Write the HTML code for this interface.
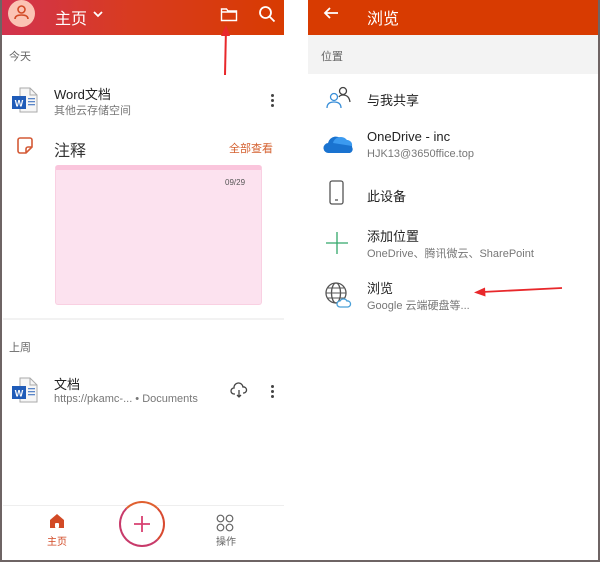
<!DOCTYPE html>
<html><head><meta charset="utf-8"><style>
*{margin:0;padding:0;box-sizing:border-box}
body{width:600px;height:562px;background:#fff;position:relative;overflow:hidden;font-family:"Liberation Sans","Noto Sans CJK SC",sans-serif;color:#222}
.a{position:absolute}
.t{font-size:13px}
.s{font-size:11px;color:#777}
</style></head><body>
<!-- outer border -->
<div class="a" style="left:0;top:0;width:2px;height:562px;background:#6e6464"></div>
<div class="a" style="left:0;top:560px;width:600px;height:2px;background:#6e6464"></div>
<div class="a" style="left:598px;top:0;width:2px;height:562px;background:#6e6464"></div>

<!-- LEFT header -->
<div class="a" style="left:2px;top:0;width:282px;height:35px;background:linear-gradient(90deg,#d2334f 0%,#d83b20 45%,#d83b01 100%)"></div>
<div class="a" style="left:8px;top:0;width:27px;height:27px;border-radius:50%;background:#fbc3b4"></div>
<svg class="a" style="left:8px;top:0" width="27" height="27" viewBox="0 0 27 27"><circle cx="13.5" cy="9.5" r="3.5" fill="none" stroke="#d24a26" stroke-width="1.6"/><path d="M7 19q0-4 6.5-4t6.5 4" fill="none" stroke="#d24a26" stroke-width="1.6"/></svg>
<div class="a" style="left:55px;top:5px;color:#fff;font-size:16px">主页</div>
<svg class="a" style="left:92px;top:10px" width="12" height="8"><path d="M2 2l4 4 4-4" fill="none" stroke="#fff" stroke-width="1.8"/></svg>
<svg class="a" style="left:220px;top:6px" width="18" height="16"><path d="M1.5 3h5l1.5 2h8.5v9.5h-15z M1.5 6h15" fill="none" stroke="#fff" stroke-width="1.4"/></svg>
<svg class="a" style="left:258px;top:5px" width="18" height="18"><circle cx="7.5" cy="7.5" r="5.5" fill="none" stroke="#fff" stroke-width="1.8"/><path d="M11.5 11.5l5 5" stroke="#fff" stroke-width="1.8"/></svg>
<!-- red arrow up -->
<svg class="a" style="left:218px;top:22px" width="16" height="56"><path d="M8 6L7 53" stroke="#e8282b" stroke-width="2"/><path d="M3 14L8 3L12 14z" fill="#e8282b"/></svg>

<div class="a s" style="left:9px;top:48px;color:#666">今天</div>
<!-- word icon -->
<svg class="a" style="left:11px;top:87px" width="28" height="28"><path d="M9 1h10l7 7v17H9z" fill="#f6f6f6" stroke="#aaa"/><path d="M19 1v7h7" fill="none" stroke="#aaa"/><rect x="17" y="11" width="7" height="1.3" fill="#5a86c8"/><rect x="17" y="14" width="7" height="1.3" fill="#5a86c8"/><rect x="17" y="17" width="7" height="1.3" fill="#5a86c8"/><rect x="1" y="9" width="14" height="13" fill="#1f5bb8"/><text x="8" y="19.5" font-size="9" fill="#fff" text-anchor="middle" font-family="Liberation Sans" font-weight="bold">W</text></svg>
<div class="a t" style="left:54px;top:84px">Word文档</div>
<div class="a s" style="left:54px;top:102px">其他云存储空间</div>
<div class="a" style="left:271px;top:94px;width:3px;height:3px;border-radius:50%;background:#444;box-shadow:0 5px #444,0 10px #444"></div>

<svg class="a" style="left:16px;top:137px" width="18" height="18"><path d="M2 3a2 2 0 012-2h10a2 2 0 012 2v7l-6 6H4a2 2 0 01-2-2z M10 16v-4a2 2 0 012-2h4" fill="none" stroke="#d45a36" stroke-width="1.6"/></svg>
<div class="a" style="left:54px;top:137px;font-size:16px;color:#333">注释</div>
<div class="a" style="left:229px;top:140px;font-size:11px;color:#d4602f">全部查看</div>
<div class="a" style="left:55px;top:165px;width:207px;height:140px;background:#fce2ef;border:1px solid #f9d0e2;border-top:5px solid #fac5dc;border-radius:3px"></div>
<div class="a" style="left:225px;top:178px;font-size:8px;color:#555">09/29</div>
<div class="a" style="left:3px;top:318px;width:281px;height:2px;background:#f2f2f2"></div>

<div class="a s" style="left:9px;top:339px;color:#666">上周</div>
<svg class="a" style="left:11px;top:377px" width="28" height="28"><path d="M9 1h10l7 7v17H9z" fill="#f6f6f6" stroke="#aaa"/><path d="M19 1v7h7" fill="none" stroke="#aaa"/><rect x="17" y="11" width="7" height="1.3" fill="#5a86c8"/><rect x="17" y="14" width="7" height="1.3" fill="#5a86c8"/><rect x="17" y="17" width="7" height="1.3" fill="#5a86c8"/><rect x="1" y="9" width="14" height="13" fill="#1f5bb8"/><text x="8" y="19.5" font-size="9" fill="#fff" text-anchor="middle" font-family="Liberation Sans" font-weight="bold">W</text></svg>
<div class="a t" style="left:54px;top:374px">文档</div>
<div class="a s" style="left:54px;top:393px">https://pkamc-... • Documents</div>
<svg class="a" style="left:230px;top:382px" width="18" height="16"><path d="M5 12H4a3 3 0 010-6 4.5 4.5 0 019-1 3 3 0 011 6h-1" fill="none" stroke="#444" stroke-width="1.3"/><path d="M9 8v7M7 13l2 2 2-2" fill="none" stroke="#444" stroke-width="1.3"/></svg>
<div class="a" style="left:271px;top:385px;width:3px;height:3px;border-radius:50%;background:#444;box-shadow:0 5px #444,0 10px #444"></div>

<div class="a" style="left:3px;top:505px;width:281px;height:1px;background:#eee"></div>
<svg class="a" style="left:49px;top:513px" width="16" height="16"><path d="M1 7L8 1l7 6v8H1z" fill="#d24a26"/><rect x="6" y="10" width="4" height="5" fill="#fff" rx="1"/></svg>
<div class="a" style="left:47px;top:533px;font-size:10px;color:#d24a26">主页</div>
<div class="a" style="left:119px;top:501px;width:46px;height:46px;border-radius:50%;border:2px solid #c83a6a;border-top-color:#e06030;border-right-color:#d84a30;background:#fff"></div>
<svg class="a" style="left:131px;top:513px" width="22" height="22"><path d="M11 3v16M3 11h16" stroke="#d84070" stroke-width="1.8"/></svg>
<svg class="a" style="left:216px;top:514px" width="18" height="18"><circle cx="4.5" cy="4.5" r="3.3" fill="none" stroke="#666" stroke-width="1.2"/><circle cx="13.5" cy="4.5" r="3.3" fill="none" stroke="#666" stroke-width="1.2"/><circle cx="4.5" cy="13.5" r="3.3" fill="none" stroke="#666" stroke-width="1.2"/><circle cx="13.5" cy="13.5" r="3.3" fill="none" stroke="#666" stroke-width="1.2"/></svg>
<div class="a" style="left:216px;top:533px;font-size:10px;color:#666">操作</div>

<!-- RIGHT -->
<div class="a" style="left:308px;top:0;width:290px;height:35px;background:#d83b01"></div>
<svg class="a" style="left:323px;top:6px" width="16" height="14"><path d="M15 7H2M7 2L2 7l5 5" fill="none" stroke="#fff" stroke-width="1.8"/></svg>
<div class="a" style="left:367px;top:5px;color:#fff;font-size:16px">浏览</div>
<div class="a" style="left:308px;top:35px;width:290px;height:39px;background:#f3f3f3"></div>
<div class="a s" style="left:321px;top:48px;color:#666">位置</div>

<svg class="a" style="left:325px;top:86px" width="26" height="24"><circle cx="9" cy="11" r="3.5" fill="none" stroke="#3a8fd8" stroke-width="1.3"/><path d="M2 22q0-6 7-6t7 6" fill="none" stroke="#3a8fd8" stroke-width="1.3"/><circle cx="18" cy="5" r="3.5" fill="none" stroke="#444" stroke-width="1.3"/><path d="M14 11q1-2 4-2 6 0 7 7" fill="none" stroke="#444" stroke-width="1.3"/></svg>
<div class="a t" style="left:367px;top:90px">与我共享</div>

<svg class="a" style="left:323px;top:134px" width="30" height="20"><path d="M6 19a5 5 0 01-1-10 8 8 0 0115-2 6 6 0 019 6 4 4 0 01-2 6z" fill="#1a73d0"/><path d="M10 9a8 8 0 0114-3 5 5 0 015 6" fill="#3b9af0"/></svg>
<div class="a t" style="left:367px;top:129px">OneDrive - inc</div>
<div class="a s" style="left:367px;top:148px">HJK13@3650ffice.top</div>

<svg class="a" style="left:329px;top:180px" width="16" height="26"><rect x="1" y="1" width="13" height="23" rx="2" fill="none" stroke="#555" stroke-width="1.3"/><path d="M6 20h3" stroke="#555" stroke-width="1.3"/></svg>
<div class="a t" style="left:367px;top:186px">此设备</div>

<svg class="a" style="left:325px;top:231px" width="24" height="24"><path d="M12 1v22M1 12h22" stroke="#33a86a" stroke-width="1.3"/></svg>
<div class="a t" style="left:367px;top:226px">添加位置</div>
<div class="a s" style="left:367px;top:245px">OneDrive、腾讯微云、SharePoint</div>

<svg class="a" style="left:324px;top:281px" width="28" height="28"><circle cx="12" cy="12" r="10" fill="none" stroke="#555" stroke-width="1.3"/><ellipse cx="12" cy="12" rx="4.5" ry="10" fill="none" stroke="#555" stroke-width="1.3"/><path d="M2 12h20M4 7h16M4 17h16" stroke="#555" stroke-width="1.1"/><path d="M16 26a3 3 0 010-6 4 4 0 017 0 3 3 0 011 6z" fill="#fff" stroke="#4aa0d8" stroke-width="1.3"/></svg>
<div class="a t" style="left:367px;top:278px">浏览</div>
<div class="a s" style="left:367px;top:297px">Google 云端硬盘等...</div>
<svg class="a" style="left:472px;top:284px" width="92" height="14"><path d="M10 8L90 4" stroke="#e8282b" stroke-width="1.8"/><path d="M2 8.5L13 3.5L13.5 12.5z" fill="#e8282b"/></svg>
</body></html>
